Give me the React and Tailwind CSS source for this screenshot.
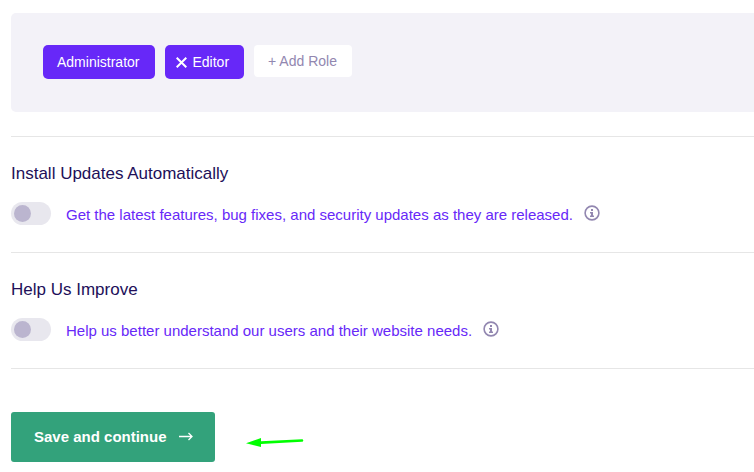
import React from 'react';

const InfoIcon = () => (
  <svg viewBox="0 0 16 16" className="w-4 h-4" fill="none" aria-hidden="true">
    <circle cx="8" cy="8" r="6.9" stroke="#9287b0" strokeWidth="1.6" />
    <path d="M7 4h2v2H7zM6 7h3v3.5h1V12H6v-1.5h1v-2H6z" fill="#9287b0" />
  </svg>
);

const settings = [
  {
    id: 'updates',
    title: 'Install Updates Automatically',
    label: 'Get the latest features, bug fixes, and security updates as they are released.',
  },
  {
    id: 'improve',
    title: 'Help Us Improve',
    label: 'Help us better understand our users and their website needs.',
  },
];

const Setting = ({ id, title, label }) => (
  <section className="border-t border-[#e6e6e6] pt-[25px] pb-[27px]">
    <h2 className="text-[17px] leading-6 text-[#210f59]">{title}</h2>
    <div className="flex items-center mt-[15px] h-6">
      <input
        id={id}
        type="checkbox"
        className="appearance-none shrink-0 w-10 h-[23px] p-[3px] rounded-full bg-[#e8e7ee] before:block before:w-[17px] before:h-[17px] before:rounded-full before:bg-[#bbb5cf] checked:bg-[#6728f8] checked:before:translate-x-[17px]"
      />
      <label htmlFor={id} className="ml-[15px] pt-1 text-[15px] leading-5 text-[#6728f8]">
        {label}
      </label>
      <button type="button" aria-label="More information" className="ml-[11px] pb-px">
        <InfoIcon />
      </button>
    </div>
  </section>
);

const App = () => {
  return (
    <main className="pl-[11px] pt-[13px] bg-white font-['Liberation_Sans',Arial,sans-serif]">
      {/* Roles */}
      <div className="flex items-start gap-[10px] px-8 pt-8 pb-[33px] mb-6 rounded-l-[5px] bg-[#f3f2f8] text-sm">
        <button type="button" className="h-[34px] pl-[14px] pr-4 rounded-[5px] bg-[#6728f8] text-white">
          Administrator
        </button>
        <button type="button" className="flex items-center gap-[5px] h-[34px] pl-[11px] pr-[15px] rounded-[5px] bg-[#6728f8] text-white">
          <svg viewBox="0 0 11 11" className="w-[11px] h-[11px]" fill="none" aria-hidden="true">
            <path d="M.7.7l9.6 9.6M10.3.7L.7 10.3" stroke="currentColor" strokeWidth="2" />
          </svg>
          Editor
        </button>
        <button type="button" className="h-8 pl-[14px] pr-[15px] rounded-[4px] bg-white text-[#9287b0]">
          + Add Role
        </button>
      </div>

      {/* Toggles */}
      {settings.map((item) => (
        <Setting key={item.id} {...item} />
      ))}

      {/* Submit */}
      <div className="flex items-center pt-[43px] pb-[10px] border-t border-[#e6e6e6]">
        <button
          type="button"
          className="flex items-center h-[50px] pl-[23px] pr-[22px] gap-3 rounded-[3px] bg-[#33a27b] text-white text-[15px] font-bold"
        >
          Save and continue
          <svg viewBox="0 0 14 10" className="w-[14px] h-[10px]" fill="none" aria-hidden="true">
            <path d="M0 4.5h13M9.5 1l3.5 3.5L9.5 8" stroke="currentColor" strokeWidth="1.3" />
          </svg>
        </button>
        <svg viewBox="0 0 58 12" className="w-[58px] h-3 ml-[31px] mt-2" aria-hidden="true">
          <path d="M0 8.3L15 3v3.2L56 4.2a1.3 1.3 0 0 1 0 2.6L15 9v3z" fill="#00ff00" />
        </svg>
      </div>
    </main>
  );
};

export default App;
